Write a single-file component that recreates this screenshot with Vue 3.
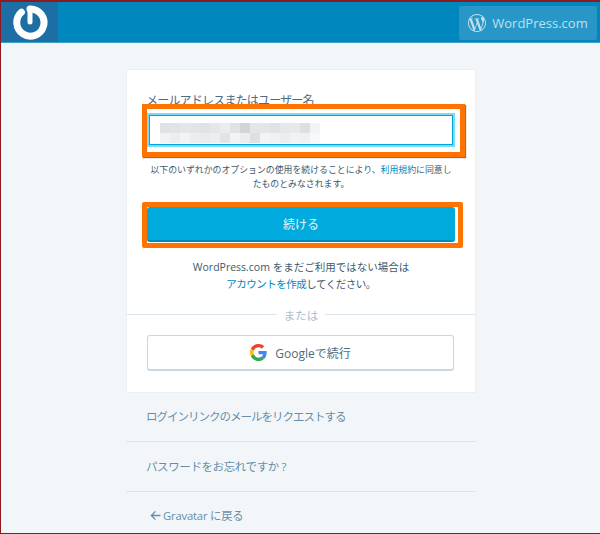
<template>
  <div class="frame">
    <header class="masterbar">
      <a class="home">
        <svg viewBox="0 0 36 36" class="logo" fill="none" stroke="#fff" stroke-linecap="round">
          <path stroke-width="7" d="M9.500 8.200A13.600 13.600 0 1 0 18 4.900" />
          <path stroke-width="5" d="M18 5v13" />
        </svg>
      </a>
      <a class="wp-link">
        <svg viewBox="0 0 24 24" class="wp-icon">
          <path fill="currentColor" d="M21.469 6.825c.84 1.537 1.318 3.3 1.318 5.175 0 3.979-2.156 7.456-5.363 9.325l3.295-9.527c.615-1.54.82-2.771.82-3.864 0-.405-.026-.78-.07-1.11m-7.981.105c.647-.03 1.232-.105 1.232-.105.582-.075.514-.93-.067-.899 0 0-1.755.135-2.88.135-1.064 0-2.85-.15-2.85-.15-.585-.03-.661.855-.075.885 0 0 .54.061 1.125.09l1.68 4.605-2.37 7.08L5.354 6.9c.649-.03 1.234-.1 1.234-.1.585-.075.516-.93-.065-.896 0 0-1.746.138-2.874.138-.2 0-.438-.008-.69-.015C4.911 3.15 8.235 1.215 12 1.215c2.809 0 5.365 1.072 7.286 2.833-.046-.003-.091-.009-.141-.009-1.06 0-1.812.923-1.812 1.914 0 .89.513 1.643 1.06 2.531.411.72.89 1.643.89 2.977 0 .915-.354 1.994-.821 3.479l-1.075 3.585-3.9-11.61.001.014zM12 22.784c-1.059 0-2.081-.153-3.048-.437l3.237-9.406 3.315 9.087c.024.053.05.101.078.149-1.12.393-2.325.609-3.582.609M1.211 12c0-1.564.336-3.05.935-4.39L7.29 21.709C3.694 19.96 1.212 16.271 1.211 12M12 0C5.385 0 0 5.385 0 12s5.385 12 12 12 12-5.385 12-12S18.615 0 12 0" />
        </svg>
        <span>WordPress.com</span>
      </a>
    </header>

    <main class="login">
      <form class="card" @submit.prevent>
        <div class="fields">
          <label class="field-label">メールアドレスまたはユーザー名</label>
          <div class="input-wrap">
            <div class="field-input">
              <div class="mosaic">
                <i v-for="(shade, i) in mosaic" :key="i" :style="{ background: shade }"></i>
              </div>
            </div>
            <span class="marker marker-input"></span>
          </div>
          <p class="tos">以下のいずれかのオプションの使用を続けることにより、<a>利用規約</a>に同意したものとみなされます。</p>
          <div class="input-wrap">
            <button type="button" class="primary">続ける</button>
            <span class="marker marker-button"></span>
          </div>
          <p class="signup">WordPress.com をまだご利用ではない場合は<br /><span class="signup-cta"><a>アカウントを作成</a>してください。</span></p>
        </div>
        <div class="divider"><span>または</span></div>
        <div class="social">
          <button type="button" class="google">
            <svg viewBox="0 0 48 48" class="g-icon">
              <path fill="#EA4335" d="M24 9.500c3.540 0 6.710 1.220 9.210 3.600l6.850-6.850C35.900 2.380 30.470 0 24 0 14.620 0 6.510 5.380 2.560 13.220l7.980 6.190C12.430 13.720 17.740 9.500 24 9.500z" />
              <path fill="#4285F4" d="M46.980 24.550c0-1.570-.15-3.090-.38-4.550H24v9.020h12.940c-.58 2.960-2.260 5.480-4.780 7.180l7.730 6c4.510-4.180 7.090-10.360 7.090-17.650z" />
              <path fill="#FBBC05" d="M10.530 28.590c-.48-1.450-.76-2.990-.76-4.590s.27-3.140.76-4.590l-7.980-6.190C.92 16.460 0 20.120 0 24c0 3.880.92 7.540 2.560 10.780l7.970-6.190z" />
              <path fill="#34A853" d="M24 48c6.480 0 11.930-2.130 15.890-5.810l-7.730-6c-2.150 1.450-4.920 2.300-8.160 2.300-6.260 0-11.570-4.220-13.470-9.910l-7.980 6.190C6.510 42.620 14.620 48 24 48z" />
            </svg>
            <span>Googleで続行</span>
          </button>
        </div>
      </form>

      <nav class="links">
        <a>ログインリンクのメールをリクエストする</a>
        <a class="lost">パスワードをお忘れですか ?</a>
        <a class="back">
          <svg viewBox="0 0 12 12" class="arrow" fill="none" stroke="currentColor" stroke-width="1.500">
            <path d="M11.500 6H1.500M6 1.500 1.500 6 6 10.500" />
          </svg>
          <span>Gravatar に戻る</span>
        </a>
      </nav>
    </main>
  </div>
</template>

<script setup>
const rowOne = ['#dfe3e6', '#e0e4e7', '#e4e7e9', '#e2e5e8', '#dfe3e6', '#e4e6e9', '#eaecee', '#dfe3e6', '#d0d5d8', '#e3e5e7', '#e1e6e9', '#dfe3e6', '#e5e8ea', '#e6e8ea', '#dde0e3', '#f2f3f5']
const rowTwo = ['#f1f2f3', '#ebedef', '#f2f3f4', '#ecedef', '#e9ebed', '#ecedef', '#e0e4e7', '#f2f3f4', '#ecedef', '#dde1e4', '#f3f4f5', '#f0f1f3', '#ecedef', '#f1f2f3', '#eff0f2', '#f7f8f9']
const mosaic = [...rowOne, ...rowTwo]
</script>

<style scoped>
.frame {
  width: 600px;
  height: 534px;
  box-sizing: border-box;
  border: 1px solid #8e1a1f;
  border-top-width: 2px;
  border-right-width: 0;
  background: #f3f6f8;
  overflow: hidden;
  font-family: "Open Sans", "Noto Sans CJK JP", sans-serif;
  color: #4f6b80;
}

.masterbar {
  height: 41px;
  box-sizing: border-box;
  display: flex;
  justify-content: space-between;
  background: #0087be;
  border-bottom: 1px solid #3d9fc9;
}

.home {
  width: 57px;
  display: flex;
  align-items: center;
  justify-content: center;
  background: #1c6ea4;
}

.logo {
  width: 36px;
  height: 36px;
}

.wp-link {
  margin: 4px 3px 2px 0;
  width: 138px;
  display: flex;
  align-items: center;
  justify-content: center;
  gap: 6px;
  border-radius: 2px;
  background: #2897c7;
  color: #bfe0ef;
  font-size: 13px;
}

.wp-icon {
  width: 18px;
  height: 18px;
}

.login {
  width: 350px;
  margin: 26px 0 0 125px;
}

.card {
  box-sizing: border-box;
  height: 324px;
  background: #fff;
  border: 1px solid #e9eff3;
}

.fields {
  padding: 22px 20px 0;
}

.field-label {
  display: block;
  margin-left: -1px;
  font-size: 12px;
  letter-spacing: -0.8px;
  line-height: 17px;
  color: #4f6b80;
}

.input-wrap {
  position: relative;
}

.field-input {
  box-sizing: border-box;
  height: 34px;
  margin-top: 4px;
  background: #fff;
  border: 2px solid #78dcfa;
  box-shadow: 0 0 0 1px #00a4d6 inset;
  padding: 8px 11px;
}

.mosaic {
  display: grid;
  grid-template-columns: repeat(16, 10px);
  grid-auto-rows: 10px;
}

.marker {
  position: absolute;
  border: 5px solid #ff7300;
  box-sizing: border-box;
  pointer-events: none;
}

.marker-input {
  left: -5px;
  right: -10px;
  top: -9px;
  height: 53px;
  box-shadow: 1px 1px 1px #6b7a85;
}

.marker-button {
  left: -5px;
  right: -8px;
  top: -5px;
  height: 46px;
  border-radius: 2px;
}

.tos {
  margin: 16px 0;
  font-size: 8.900px;
  line-height: 14px;
  text-align: center;
  color: #3d596d;
}

.tos a {
  color: #0087be;
}

.primary {
  display: block;
  width: 100%;
  height: 35px;
  border: 0;
  border-bottom: 2px solid #008ab3;
  border-radius: 3px;
  background: #00aadc;
  color: #e4f5fb;
  font: inherit;
  font-size: 12px;
}

.signup {
  margin: 17px 0 0;
  font-size: 10.500px;
  line-height: 16.500px;
  text-align: center;
  color: #3d596d;
}

.signup a {
  color: #0087be;
}

.signup-cta {
  letter-spacing: -0.5px;
}

.divider {
  position: relative;
  height: 20px;
  margin-top: 13px;
  display: flex;
  align-items: center;
  justify-content: center;
  font-size: 11.500px;
  color: #a8bece;
}

.divider::before {
  content: "";
  position: absolute;
  left: 0;
  right: 0;
  top: 9px;
  height: 1px;
  background: #dbe5ec;
}

.divider span {
  position: relative;
  padding: 0 7px;
  background: #fff;
}

.social {
  padding: 10px 20px 0;
}

.google {
  width: 307px;
  height: 36px;
  display: flex;
  align-items: center;
  justify-content: center;
  gap: 8px;
  background: #fff;
  border: 1px solid #c8d7e1;
  border-bottom-width: 2px;
  border-radius: 3px;
  font: inherit;
  font-size: 12px;
  color: #4f6b80;
  padding: 0;
}

.g-icon {
  width: 17px;
  height: 17px;
}

.links {
  display: flex;
  flex-direction: column;
}

.links a {
  display: flex;
  align-items: center;
  height: 49px;
  padding: 0 0 2px 20px;
  box-sizing: border-box;
  font-size: 11.500px;
  letter-spacing: -1px;
  color: #668eaa;
  border-bottom: 1px solid #dbe5ec;
}

.links a.lost {
  height: 50px;
  letter-spacing: -0.4px;
}

.links a.back {
  border-bottom: 0;
  height: 50px;
  padding: 0 0 4px 24px;
  gap: 2px;
  font-size: 11.300px;
  letter-spacing: -0.2px;
}

.arrow {
  width: 11px;
  height: 11px;
}
</style>

<style>
html,
body {
  margin: 0;
}
</style>
